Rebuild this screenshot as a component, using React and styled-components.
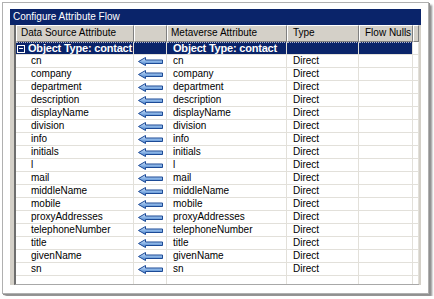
import React from 'react';
import styled, { createGlobalStyle } from 'styled-components';

const COLS = '118px 33px 120px 72px 54px 6px';
const GRID = '#e2e0da';
const NAVY = '#0a246a';

const GlobalStyle = createGlobalStyle`
    html, body { margin: 0; padding: 0; background: #fff; }
    body {
        padding: 2px;
        font-family: "Liberation Sans", Arial, sans-serif;
    }
`

const Frame = styled.div`
    width: 411px;
    padding: 6px 7px 8px 7px;
    border: 1px solid #b0b0b0;
    background: #fff;
    box-shadow: 1px 1px 0 #909090, 3px 3px 2px rgba(0,0,0,0.45);
`

const TitleBar = styled.div`
    height: 16px;
    background: ${NAVY};
    color: #fff;
    font-size: 10px;
    line-height: 16px;
    padding-left: 3px;
`

const Panel = styled.div`
    background: #d4d0c8;
    padding: 0 2px 0 4px;
`

const ListView = styled.div`
    height: 259px;
    overflow: hidden;
    background: #fff;
    border-left: 2px solid #6e6e6e;
    border-bottom: 1px solid #a8a8a8;
`

const Row = styled.div`
    display: grid;
    grid-template-columns: ${COLS};
    height: ${p => p.$h}px;
`

const HeadCell = styled.div`
    box-sizing: border-box;
    background: #d4d0c8;
    border-top: 1px solid #fff;
    border-left: 1px solid #fff;
    border-right: 1px solid #808080;
    border-bottom: 1px solid #808080;
    font-size: 10px;
    line-height: 14px;
    padding-left: ${p => p.$pad || 0}px;
    color: #000;
    white-space: nowrap;
    overflow: hidden;
`

const GroupCell = styled.div`
    box-sizing: border-box;
    display: flex;
    align-items: center;
    gap: 3px;
    background: ${p => p.$blank ? '#fff' : NAVY};
    border-top: 1px dotted ${p => p.$blank ? '#fff' : '#b8b8c8'};
    border-right: 1px solid ${GRID};
    border-bottom: 1px solid ${GRID};
    color: #fff;
    font-size: 11px;
    font-weight: bold;
    letter-spacing: -0.2px;
    line-height: 11px;
    padding-left: ${p => p.$pad || 0}px;
    white-space: nowrap;
    overflow: hidden;
`

const MinusBox = styled.span`
    position: relative;
    box-sizing: border-box;
    width: 8px;
    height: 8px;
    border: 1px solid #fff;
    flex: none;
    &::after {
        content: '';
        position: absolute;
        left: 1px;
        top: 2px;
        width: 4px;
        height: 1px;
        background: #fff;
    }
`

const Cell = styled.div`
    box-sizing: border-box;
    border-right: 1px solid ${GRID};
    border-bottom: ${p => p.$last ? 'none' : `1px solid ${GRID}`};
    font-size: 10px;
    line-height: 12px;
    color: #000;
    padding-left: ${p => p.$pad || 0}px;
    white-space: nowrap;
    overflow: hidden;
    display: flex;
    align-items: center;
    justify-content: ${p => p.$center ? 'center' : 'flex-start'};
`

const Arrow = () => (
    <svg width="25" height="9" viewBox="0 0 25 9">
        <defs>
            <linearGradient id="ag" x1="0" y1="0" x2="0" y2="1">
                <stop offset="0" stopColor="#d6e6fa" />
                <stop offset="0.5" stopColor="#8ab4e6" />
                <stop offset="1" stopColor="#3f78c4" />
            </linearGradient>
        </defs>
        <path d="M0.5 4.5 L7.5 0.5 L7.5 3 L24.5 3 L24.5 6.5 L7.5 6.5 L7.5 8.5 Z"
            fill="url(#ag)" stroke="#1c4a96" strokeWidth="1" strokeLinejoin="miter" />
    </svg>
);

const attributes = [
    'cn', 'company', 'department', 'description', 'displayName', 'division',
    'info', 'initials', 'l', 'mail', 'middleName', 'mobile', 'proxyAddresses',
    'telephoneNumber', 'title', 'givenName', 'sn'
];

export default function App() {
    return (
        <>
            <GlobalStyle />
            <Frame>
                <TitleBar>Configure Attribute Flow</TitleBar>
                <Panel>
                    <ListView>
                        <Row $h={17}>
                            <HeadCell $pad={4}>Data Source Attribute</HeadCell>
                            <HeadCell />
                            <HeadCell $pad={3}>Metaverse Attribute</HeadCell>
                            <HeadCell $pad={5}>Type</HeadCell>
                            <HeadCell $pad={5}>Flow Nulls</HeadCell>
                            <HeadCell />
                        </Row>
                        <Row $h={13}>
                            <GroupCell $pad={1}><MinusBox />Object Type: contact</GroupCell>
                            <GroupCell />
                            <GroupCell $pad={6}>Object Type: contact</GroupCell>
                            <GroupCell />
                            <GroupCell />
                            <GroupCell $blank />
                        </Row>
                        {attributes.map((name) => (
                            <Row $h={13} key={name}>
                                <Cell $pad={15}>{name}</Cell>
                                <Cell $center><Arrow /></Cell>
                                <Cell $pad={6}>{name}</Cell>
                                <Cell $pad={6}>Direct</Cell>
                                <Cell />
                                <Cell />
                            </Row>
                        ))}
                        <Row $h={10}>
                            <Cell $last />
                            <Cell $last />
                            <Cell $last />
                            <Cell $last />
                            <Cell $last />
                            <Cell $last />
                        </Row>
                    </ListView>
                </Panel>
            </Frame>
        </>
    );
}
